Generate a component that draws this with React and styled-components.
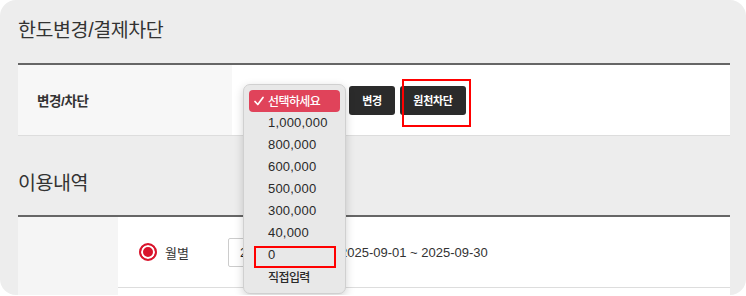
import React from 'react'
import styled, { createGlobalStyle } from 'styled-components'

const GlobalStyle = createGlobalStyle`
    html, body {
        margin: 0;
        padding: 0;
        background: #ffffff;
    }
    body {
        font-family: 'Liberation Sans', 'Noto Sans CJK KR', sans-serif;
        color: #333;
    }
`

const options = ['1,000,000', '800,000', '600,000', '500,000', '300,000', '40,000', '0', '직접입력']

export default function App() {
    return (
        <>
            <GlobalStyle />
            <Card>
                <Title top={15}>한도변경/결제차단</Title>
                <Table cols="214px 1fr">
                    <HeadCell>변경/차단</HeadCell>
                    <ValueCell>
                        <SelectWrap>
                            <Popup>
                                <Item selected>
                                    <Check width="10" height="10" viewBox="0 0 10 10">
                                        <polyline points="1,5.5 3.8,8.5 9,1.5" fill="none" stroke="#fff" strokeWidth="1.7" strokeLinecap="round" strokeLinejoin="round" />
                                    </Check>
                                    <ItemText ko>선택하세요</ItemText>
                                </Item>
                                {options.map(o => (
                                    <Item key={o}>
                                        <ItemText ko={o === '직접입력'}>{o}</ItemText>
                                        {o === '0' && <Mark />}
                                    </Item>
                                ))}
                            </Popup>
                        </SelectWrap>
                        <Button>변경</Button>
                        <Button wide>
                            원천차단
                            <ButtonMark />
                        </Button>
                    </ValueCell>
                </Table>
                <Title top={32}>이용내역</Title>
                <Table cols="100px 1fr">
                    <SideCell />
                    <Rows>
                        <Row>
                            <Radio />
                            <RadioLabel>월별</RadioLabel>
                            <MonthInput>2025-09</MonthInput>
                            <DateText>2025-09-01 ~ 2025-09-30</DateText>
                        </Row>
                        <Row />
                    </Rows>
                </Table>
            </Card>
        </>
    )
}

const Card = styled.div`
    width: 746px;
    height: 295px;
    box-sizing: border-box;
    padding: 0 16px 0 18px;
    background: #ededed;
    border-radius: 16px;
    overflow: hidden;
`

const Title = styled.div`
    padding-top: ${props => props.top}px;
    height: ${props => props.top === 15 ? 48 : 47}px;
    line-height: 30px;
    font-size: 19.5px;
    letter-spacing: -0.4px;
    color: #333;
`

const Table = styled.div`
    display: grid;
    grid-template-columns: ${props => props.cols};
    border-top: 2px solid #666;
`

const HeadCell = styled.div`
    height: 70px;
    display: flex;
    align-items: center;
    padding-left: 19px;
    background: #f7f7f7;
    border-bottom: 1px solid #dddddd;
    font-size: 13.5px;
    font-weight: bold;
    letter-spacing: -0.4px;
    color: #333;
`

const ValueCell = styled.div`
    height: 70px;
    display: flex;
    align-items: center;
    padding-left: 11px;
    background: #ffffff;
    border-bottom: 1px solid #dddddd;
`

const SelectWrap = styled.div`
    position: relative;
    width: 100px;
    height: 29px;
    margin-right: 6px;
`

const Popup = styled.div`
    position: absolute;
    left: 0;
    top: -2px;
    z-index: 5;
    width: 103px;
    box-sizing: border-box;
    padding: 5px 5px;
    background: #e8e8e8;
    border: 1px solid #d0d0d0;
    border-radius: 7px;
    box-shadow: 0 3px 10px rgba(0, 0, 0, 0.18);
`

const Item = styled.div`
    position: relative;
    height: 22px;
    display: flex;
    align-items: center;
    padding-left: 19px;
    border-radius: 4px;
    background: ${props => props.selected ? '#e0435a' : 'transparent'};
    color: ${props => props.selected ? '#ffffff' : '#2a2a2a'};
`

const Check = styled.svg`
    position: absolute;
    left: 5px;
    top: 6px;
`

const ItemText = styled.span`
    font-size: ${props => props.ko ? '12px' : '13px'};
    letter-spacing: ${props => props.ko ? '-0.6px' : '0.2px'};
    font-weight: ${props => props.ko ? 500 : 400};
`

const Mark = styled.div`
    position: absolute;
    left: 5px;
    top: 2px;
    width: 82px;
    height: 22px;
    box-sizing: border-box;
    border: 2px solid #ff0000;
`

const Button = styled.div`
    position: relative;
    width: ${props => props.wide ? 66 : 46}px;
    height: 29px;
    margin-right: 5px;
    display: flex;
    align-items: center;
    justify-content: center;
    background: #2b2b2b;
    border-radius: 3px;
    color: #ffffff;
    font-size: 11px;
    font-weight: bold;
    letter-spacing: -0.3px;
`

const ButtonMark = styled.div`
    position: absolute;
    left: 2px;
    top: -7px;
    width: 69px;
    height: 48px;
    box-sizing: border-box;
    border: 2px solid #ff0000;
`

const SideCell = styled.div`
    background: #f5f5f5;
    height: 80px;
`

const Rows = styled.div`
    display: flex;
    flex-direction: column;
`

const Row = styled.div`
    height: 70px;
    display: flex;
    align-items: center;
    padding-left: 21px;
    background: #ffffff;
    border-bottom: 1px solid #dddddd;
`

const Radio = styled.div`
    width: 18px;
    height: 18px;
    box-sizing: border-box;
    border-radius: 50%;
    border: 2px solid #d9142c;
    background: #d9142c;
    box-shadow: inset 0 0 0 2px #ffffff;
`

const RadioLabel = styled.span`
    margin-left: 8px;
    width: 63px;
    font-size: 13px;
    color: #333;
`

const MonthInput = styled.div`
    width: 100px;
    height: 29px;
    box-sizing: border-box;
    display: flex;
    align-items: center;
    padding-left: 11px;
    border: 1px solid #cccccc;
    border-radius: 2px;
    font-size: 13px;
    color: #222;
    margin-right: 12px;
`

const DateText = styled.span`
    font-size: 13px;
    color: #333;
`
